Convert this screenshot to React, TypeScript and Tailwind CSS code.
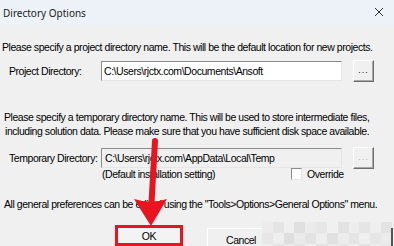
import React from 'react';

const sunken = 'border border-t-[#8c8c8c] border-l-[#8c8c8c] border-b-[#e6e6e6] border-r-[#e6e6e6]';
const raised =
  'border border-t-white border-l-white border-b-[#6e6e6e] border-r-[#6e6e6e] shadow-[inset_-1px_-1px_0_#a8a8a8]';

const shades = [
  '#ececec', '#e4e4e4', '#efefef', '#e0e0e0', '#ebebeb', '#e6e6e6', '#f0f0f0', '#e2e2e2', '#ededed', '#e5e5e5', '#eeeeee', '#e3e3e3',
  '#e7e7e7', '#efefef', '#dedede', '#eaeaea', '#e3e3e3', '#eeeeee', '#e1e1e1', '#ececec', '#e4e4e4', '#efefef', '#e6e6e6', '#ebebeb',
  '#eeeeee', '#e5e5e5', '#ebebeb', '#e2e2e2', '#efefef', '#e4e4e4', '#eaeaea', '#e6e6e6', '#f0f0f0', '#e3e3e3', '#ececec', '#e8e8e8',
];

const BrowseButton = ({ disabled }: { disabled?: boolean }) => (
  <div
    className={`w-[21px] h-[22px] bg-[#f0f0f0] flex items-center justify-center ${raised} ${
      disabled ? 'text-[#b4b4b4]' : 'text-black'
    }`}
  >
    <span className="text-[9px] leading-none tracking-[1px] -mt-[2px]">...</span>
  </div>
);

const App = () => {
  return (
    <div className="relative w-[394px] h-[246px] overflow-hidden bg-[#f0f0f0] text-black font-['Liberation_Sans',Arial,sans-serif] text-[10.5px] tracking-[-0.45px] leading-[14px]">
      {/* Title bar */}
      <div className="h-[25px] bg-[#edf2f8] flex items-center justify-between pl-[3px] pr-[10px]">
        <span className="font-['Noto_Sans',sans-serif] text-[10px] tracking-normal text-[#1a1a1a]">Directory Options</span>
        <svg width="10" height="10" viewBox="0 0 10 10" className="mb-[2px]">
          <path d="M1 1 L9 9 M9 1 L1 9" stroke="#333" strokeWidth="1" fill="none" />
        </svg>
      </div>

      {/* Project directory */}
      <div className="mt-[15px] pl-[2px] whitespace-nowrap">
        Please specify a project directory name. This will be the default location for new projects.
      </div>
      <div className="mt-[6px] flex items-center h-[22px]">
        <span className="w-[101px] pl-[9px] whitespace-nowrap">Project Directory:</span>
        <div className={`w-[241px] h-[20px] bg-white flex items-center pl-[2px] whitespace-nowrap ${sunken}`}>
          C:\Users\rjctx.com\Documents\Ansoft
        </div>
        <div className="ml-[11px]">
          <BrowseButton />
        </div>
      </div>

      {/* Temporary directory */}
      <div className="mt-[28px] pl-[4px] whitespace-nowrap">
        <div>Please specify a temporary directory name. This will be used to store intermediate files,</div>
        <div className="pl-[1px]">including solution data. Please make sure that you have sufficient disk space available.</div>
      </div>
      <div className="mt-[9px] flex items-center h-[22px]">
        <span className="w-[101px] pl-[9px] whitespace-nowrap">Temporary Directory:</span>
        <div className={`w-[241px] h-[20px] bg-[#f0f0f0] flex items-center pl-[3px] whitespace-nowrap ${sunken}`}>
          C:\Users\rjctx.com\AppData\Local\Temp
        </div>
        <div className="ml-[11px]">
          <BrowseButton disabled />
        </div>
      </div>
      <div className="-mt-px flex items-center h-[12px] leading-[12px]">
        <span className="w-[291px] pl-[102px] whitespace-nowrap">(Default installation setting)</span>
        <div className={`w-[11px] h-[12px] bg-white ${sunken}`} />
        <span className="ml-[5px]">Override</span>
      </div>

      <div className="mt-[17px] pl-[4px] whitespace-nowrap">
        All general preferences can be edited using the "Tools&gt;Options&gt;General Options" menu.
      </div>

      {/* Buttons */}
      <div className="mt-[14px] flex items-start">
        <div className="ml-[115px] w-[68px] h-[21px] border-[3px] border-[#e8141f] bg-[#f3f3f3] flex items-center justify-center">
          OK
        </div>
        <div className={`ml-[24px] mt-[3px] w-[68px] h-[23px] bg-[#f0f0f0] flex items-center justify-center ${raised}`}>
          Cancel
        </div>
      </div>

      {/* Mosaic over the hidden part of the button row */}
      <div className="absolute left-[262px] top-[222px] grid grid-cols-12 w-[130px]">
        {shades.map((c, i) => (
          <div key={i} className="h-[11px]" style={{ backgroundColor: c }} />
        ))}
      </div>
      <div className="absolute left-[391px] top-[228px] w-[2px] h-[18px] bg-[#555]" />

      {/* Red annotation arrow */}
      <svg className="absolute left-0 top-0 pointer-events-none" width="394" height="246" viewBox="0 0 394 246">
        <path d="M155 141 L151.5 203" stroke="#e8141f" strokeWidth="6" strokeLinecap="round" fill="none" />
        <path d="M134 199 Q151 204 167 199 L151 226 Z" fill="#e8141f" />
      </svg>
    </div>
  );
};

export default App;
